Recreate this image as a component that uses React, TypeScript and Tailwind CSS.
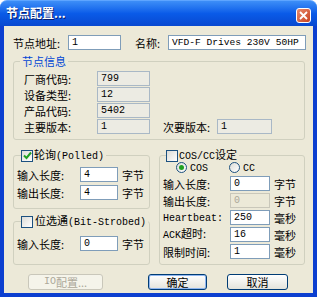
import React from "react"

const cjk = "font-['Noto_Sans_CJK_SC',sans-serif]"

// latin runs in the SimSun-like mono width
function L({ children, small }: { children: React.ReactNode; small?: boolean }) {
  return (
    <span className={`font-['Liberation_Mono','Noto_Sans_CJK_SC',monospace] ${small ? "text-[9.6px]" : "text-[10px]"}`}>
      {children}
    </span>
  )
}

function Box({
  w,
  value,
  ro,
  disabled,
}: {
  w: string
  value: React.ReactNode
  ro?: boolean
  disabled?: boolean
}) {
  return (
    <div
      className={`${w} h-[15px] flex items-center px-[3px] border leading-none whitespace-nowrap overflow-hidden ${
        ro
          ? "bg-[#ecebe3] border-[#a9b8c6] text-black"
          : disabled
          ? "bg-[#ece9d8] border-[#c9c7ba] text-[#aca899]"
          : "bg-white border-[#7f9db9] text-black"
      }`}
    >
      {value}
    </div>
  )
}

function Check({ on }: { on?: boolean }) {
  return (
    <span className="w-[12px] h-[12px] border border-[#1c5180] bg-gradient-to-br from-[#dcdcd7] to-white flex items-center justify-center">
      {on && (
        <svg width="9" height="9" viewBox="0 0 9 9">
          <path d="M1 4.5 L3.5 7 L8 1.5" stroke="#21a121" strokeWidth="2" fill="none" />
        </svg>
      )}
    </span>
  )
}

function Radio({ on }: { on?: boolean }) {
  return (
    <span className="w-[11px] h-[11px] rounded-full border border-[#1c5180] bg-gradient-to-br from-[#dcdcd7] to-white flex items-center justify-center">
      {on && <span className="w-[5px] h-[5px] rounded-full bg-[#21a121]" />}
    </span>
  )
}

function Row({
  label,
  lw,
  box,
  unit,
  className = "",
}: {
  label: React.ReactNode
  lw: string
  box: React.ReactNode
  unit?: string
  className?: string
}) {
  return (
    <div className={`flex items-center h-[15px] ${className}`}>
      <span className={`${lw} whitespace-nowrap`}>{label}</span>
      {box}
      {unit && <span className="ml-[4px]">{unit}</span>}
    </div>
  )
}

export default function App() {
  return (
    <div className={`w-[320px] h-[299px] bg-white ${cjk} text-[11px] leading-[14px] text-black`}>
      <div className="w-[317px] h-[297px] flex flex-col">
        {/* title bar */}
        <div className="h-[26px] rounded-t-[7px] bg-gradient-to-b from-[#3d8ef7] via-[#0a5be8] to-[#0848d0] border-t border-[#5ea5ff] flex items-start justify-between px-[6px]">
          <span className="mt-[5px] text-white font-bold text-[12px] [text-shadow:1px_1px_0_#0a1e6a]">
            节点配置...
          </span>
          <span className="mt-[7px] w-[15px] h-[15px] rounded-[3px] border border-white bg-gradient-to-br from-[#e88a6b] to-[#c8401c] flex items-center justify-center">
            <svg width="9" height="9" viewBox="0 0 9 9">
              <path d="M1 1 L8 8 M8 1 L1 8" stroke="white" strokeWidth="1.8" />
            </svg>
          </span>
        </div>

        {/* body */}
        <div className="flex-1 bg-[#ece9d8] border-x-[4px] border-b-[4px] border-[#0c3fd0] flex flex-col">
          <div className="flex items-center mt-[9px] ml-[9px]">
            <span className="w-[55px]">节点地址:</span>
            <Box w="w-[53px]" value={<L>1</L>} />
            <span className="ml-[14px] w-[33px]">名称:</span>
            <Box w="w-[138px]" value={<L small>VFD-F Drives 230V 50HP</L>} />
          </div>

          <fieldset className="mt-[4px] ml-[9px] w-[292px] border border-[#d0d0bf] rounded-[3px] pl-[10px] pt-[3px] pb-[5px]">
            <legend className="ml-[-4px] px-[2px] text-[#0046d5]">节点信息</legend>
            <div className="flex flex-col gap-[1px]">
              <Row label="厂商代码:" lw="w-[73px]" box={<Box ro w="w-[53px]" value={<L>799</L>} />} />
              <Row label="设备类型:" lw="w-[73px]" box={<Box ro w="w-[53px]" value={<L>12</L>} />} />
              <Row label="产品代码:" lw="w-[73px]" box={<Box ro w="w-[53px]" value={<L>5402</L>} />} />
              <div className="flex items-center h-[15px]">
                <span className="w-[73px]">主要版本:</span>
                <Box ro w="w-[53px]" value={<L>1</L>} />
                <span className="ml-[13px] w-[54px]">次要版本:</span>
                <Box ro w="w-[55px]" value={<L>1</L>} />
              </div>
            </div>
          </fieldset>

          <div className="flex gap-[9px] ml-[9px] mt-[7px]">
            {/* left column */}
            <div className="w-[137px] flex flex-col">
              <fieldset className="border border-[#d0d0bf] rounded-[3px] pl-[3px] pt-[3px] pb-[8px]">
                <legend className="ml-[4px] pr-[2px] flex items-center gap-[1px]">
                  <Check on />
                  <span>
                    轮询<L>(Polled)</L>
                  </span>
                </legend>
                <div className="flex flex-col gap-[3px]">
                  <Row label="输入长度:" lw="w-[63px]" box={<Box w="w-[38px]" value={<L>4</L>} />} unit="字节" />
                  <Row label="输出长度:" lw="w-[63px]" box={<Box w="w-[38px]" value={<L>4</L>} />} unit="字节" />
                </div>
              </fieldset>
              <fieldset className="mt-[4px] flex-1 border border-[#d0d0bf] rounded-[3px] pl-[3px] pt-[6px]">
                <legend className="ml-[4px] pr-[2px] flex items-center gap-[2px]">
                  <Check />
                  <span>
                    位选通<L>(Bit-Strobed)</L>
                  </span>
                </legend>
                <Row label="输入长度:" lw="w-[63px]" box={<Box w="w-[38px]" value={<L>0</L>} />} unit="字节" />
              </fieldset>
            </div>

            {/* right column */}
            <fieldset className="w-[146px] border border-[#d0d0bf] rounded-[3px] pl-[3px] pb-[5px]">
              <legend className="ml-[3px] pr-[2px] flex items-center gap-[1px]">
                <Check />
                <span>
                  <L>COS/CC</L>设定
                </span>
              </legend>
              <div className="flex items-center h-[11px] ml-[13px] mt-[-2px]">
                <Radio on />
                <span className="ml-[3px]">
                  <L>COS</L>
                </span>
                <span className="ml-[21px]">
                  <Radio />
                </span>
                <span className="ml-[3px]">
                  <L>CC</L>
                </span>
              </div>
              <div className="flex flex-col gap-[2px] mt-[3px]">
                <Row label="输入长度:" lw="w-[67px]" box={<Box w="w-[40px]" value={<L>0</L>} />} unit="字节" />
                <Row label="输出长度:" lw="w-[67px]" box={<Box disabled w="w-[40px]" value={<L>0</L>} />} unit="字节" />
                <Row label={<L>Heartbeat:</L>} lw="w-[67px]" box={<Box w="w-[40px]" value={<L>250</L>} />} unit="毫秒" />
                <Row
                  label={
                    <>
                      <L>ACK</L>超时:
                    </>
                  }
                  lw="w-[67px]"
                  box={<Box w="w-[40px]" value={<L>16</L>} />}
                  unit="毫秒"
                />
                <Row label="限制时间:" lw="w-[67px]" box={<Box w="w-[40px]" value={<L>1</L>} />} unit="毫秒" />
              </div>
            </fieldset>
          </div>

          <div className="flex mt-[9px] ml-[24px]">
            <button className="w-[75px] h-[16px] rounded-[3px] border border-[#c9c7ba] bg-[#f5f4ea] text-[#aca899] flex items-center justify-center">
              <L>IO</L>配置...
            </button>
            <button className="ml-[45px] w-[59px] h-[16px] rounded-[3px] border border-[#003c74] bg-gradient-to-b from-white to-[#e3e3db] shadow-[inset_0_0_0_1px_#8fb6f0] flex items-center justify-center">
              确定
            </button>
            <button className="ml-[20px] w-[61px] h-[16px] rounded-[3px] border border-[#003c74] bg-gradient-to-b from-white to-[#e3e3db] flex items-center justify-center">
              取消
            </button>
          </div>
        </div>
      </div>
    </div>
  )
}
